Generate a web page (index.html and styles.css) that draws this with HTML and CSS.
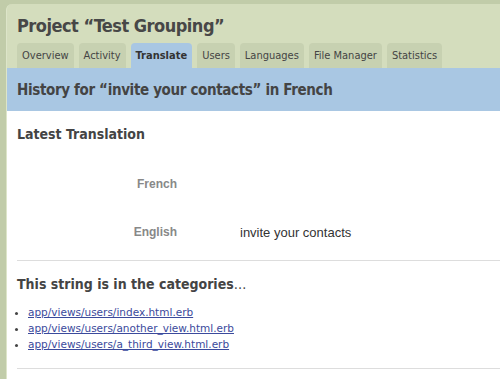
FILE: index.html
```html
<!DOCTYPE html>
<html lang="en">
<head>
  <meta charset="UTF-8" />
  <title>Project “Test Grouping” – Translate</title>
  <link rel="stylesheet" href="styles.css">
</head>
<body>
  <div class="page">
    <div class="header">
      <h1 class="project-title">Project “Test Grouping”</h1>
      <ul class="tabs">
        <li class="tab">Overview</li>
        <li class="tab">Activity</li>
        <li class="tab active">Translate</li>
        <li class="tab">Users</li>
        <li class="tab">Languages</li>
        <li class="tab">File Manager</li>
        <li class="tab">Statistics</li>
      </ul>
    </div>

    <div class="history-bar">
      <h2>History for “invite your contacts” in French</h2>
    </div>

    <div class="content">
      <h3 class="section-title">Latest Translation</h3>

      <div class="translations">
        <div class="translation-row">
          <div class="lang">French</div>
          <div class="value"></div>
        </div>
        <div class="translation-row">
          <div class="lang">English</div>
          <div class="value">invite your contacts</div>
        </div>
      </div>

      <hr class="divider" />

      <h3 class="section-title">This string is in the categories<span class="ellipsis">…</span></h3>
      <ul class="categories">
        <li><a href="#">app/views/users/index.html.erb</a></li>
        <li><a href="#">app/views/users/another_view.html.erb</a></li>
        <li><a href="#">app/views/users/a_third_view.html.erb</a></li>
      </ul>

      <hr class="divider" />
    </div>
  </div>
</body>
</html>
```

FILE: styles.css
```css
body {
  margin: 0;
  background: #c1cca9;
  font-family: 'DejaVu Sans Condensed', 'DejaVu Sans', sans-serif;
  color: #444;
  height: 100vh;
  overflow: hidden;
}

.page {
  margin: 4px 0 0 6px;
  background: #d4ddbd;
  border-radius: 6px 0 0 0;
  border-left: 1px solid #dde5c9;
  height: calc(100% - 4px);
  overflow: hidden;
}

.header {
  padding: 11px 0 0 10px;
}

.project-title {
  margin: 0 0 7px 0;
  font-size: 18px;
  font-weight: bold;
  color: #474747;
  letter-spacing: -0.5px;
}

.tabs {
  list-style: none;
  margin: 0;
  padding: 0;
  display: flex;
  gap: 5px;
}

.tab {
  height: 25px;
  line-height: 26px;
  padding: 0 5px;
  font-size: 11px;
  color: #444;
  background: #c7d1b1;
  border-radius: 4px 4px 0 0;
}

.tab.active {
  background: #a9c7e3;
  color: #333;
  font-weight: bold;
}

.history-bar {
  background: #a9c7e3;
  height: 43px;
  display: flex;
  align-items: center;
  padding-left: 10px;
}

.history-bar h2 {
  margin: 0;
  font-size: 15px;
  font-weight: bold;
  color: #444;
  letter-spacing: -0.35px;
}

.content {
  background: #fff;
  padding: 15px 0 0 10px;
  height: 100%;
}

.section-title {
  margin: 0;
  font-size: 14px;
  font-weight: bold;
  color: #444;
}

.ellipsis {
  font-weight: normal;
}

.translations {
  margin-top: 18px;
}

.translation-row {
  display: flex;
  align-items: center;
  height: 48px;
}

.lang {
  width: 160px;
  text-align: right;
  font-family: 'Liberation Sans', sans-serif;
  font-size: 12px;
  font-weight: bold;
  color: #888;
}

.value {
  padding-left: 63px;
  font-family: 'Liberation Sans', sans-serif;
  font-size: 13px;
  color: #333;
}

.divider {
  border: 0;
  border-top: 1px solid #ddd;
  margin: 4px 0 15px 0;
}

.categories {
  margin: 12px 0 0 0;
  padding-left: 11px;
  font-family: 'DejaVu Sans', sans-serif;
  font-size: 10.5px;
  line-height: 16px;
}

.categories + .divider {
  margin-top: 16px;
}

.categories a {
  color: #3b4a9c;
}
```
